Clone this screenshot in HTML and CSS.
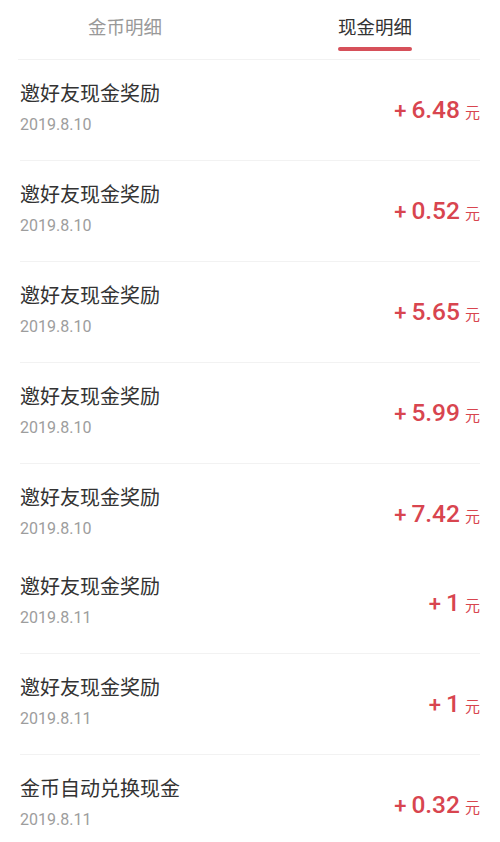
FILE: index.html
```html
<!DOCTYPE html>
<html lang="zh-CN">
<head>
    <meta charset="UTF-8">
    <meta name="viewport" content="width=device-width, initial-scale=1.0">
    <title>现金明细</title>
    <link rel="stylesheet" href="styles.css">
</head>
<body>
    <div class="tabs">
        <div class="tab">金币明细</div>
        <div class="tab active">现金明细<span class="tab-bar"></span></div>
    </div>
    <div class="tabs-line"></div>

    <ul class="list">
        <li class="item">
            <div class="info">
                <div class="title">邀好友现金奖励</div>
                <div class="date">2019.8.10</div>
            </div>
            <div class="amount"><span class="sign">+</span><span class="num">6.48</span><span class="unit">元</span></div>
        </li>
        <li class="item">
            <div class="info">
                <div class="title">邀好友现金奖励</div>
                <div class="date">2019.8.10</div>
            </div>
            <div class="amount"><span class="sign">+</span><span class="num">0.52</span><span class="unit">元</span></div>
        </li>
        <li class="item">
            <div class="info">
                <div class="title">邀好友现金奖励</div>
                <div class="date">2019.8.10</div>
            </div>
            <div class="amount"><span class="sign">+</span><span class="num">5.65</span><span class="unit">元</span></div>
        </li>
        <li class="item">
            <div class="info">
                <div class="title">邀好友现金奖励</div>
                <div class="date">2019.8.10</div>
            </div>
            <div class="amount"><span class="sign">+</span><span class="num">5.99</span><span class="unit">元</span></div>
        </li>
        <li class="item plain">
            <div class="info">
                <div class="title">邀好友现金奖励</div>
                <div class="date">2019.8.10</div>
            </div>
            <div class="amount"><span class="sign">+</span><span class="num">7.42</span><span class="unit">元</span></div>
        </li>
        <li class="item">
            <div class="info">
                <div class="title">邀好友现金奖励</div>
                <div class="date">2019.8.11</div>
            </div>
            <div class="amount"><span class="sign">+</span><span class="num">1</span><span class="unit">元</span></div>
        </li>
        <li class="item">
            <div class="info">
                <div class="title">邀好友现金奖励</div>
                <div class="date">2019.8.11</div>
            </div>
            <div class="amount"><span class="sign">+</span><span class="num">1</span><span class="unit">元</span></div>
        </li>
        <li class="item">
            <div class="info">
                <div class="title">金币自动兑换现金</div>
                <div class="date">2019.8.11</div>
            </div>
            <div class="amount"><span class="sign">+</span><span class="num">0.32</span><span class="unit">元</span></div>
        </li>
    </ul>
</body>
</html>
```

FILE: styles.css
```css
body {
    margin: 0;
    background-color: #fff;
    font-family: Roboto, "Noto Sans CJK SC", sans-serif;
    color: #333;
}
.tabs {
    display: flex;
    height: 59px;
}
.tab {
    flex: 1;
    display: flex;
    flex-direction: column;
    align-items: center;
    padding-top: 12px;
    font-family: "Noto Sans CJK SC", sans-serif;
    font-size: 18.5px;
    line-height: 28px;
    color: #999;
}
.tab.active {
    color: #333;
}
.tab-bar {
    width: 74px;
    height: 4px;
    margin-top: 7px;
    border-radius: 2px;
    background-color: #d6505a;
}
.tabs-line {
    height: 1px;
    margin: 0 20px 0 18px;
    background-color: #f2f2f2;
}
.list {
    list-style: none;
    margin: 0 20px;
    padding: 0;
}
.item {
    display: flex;
    justify-content: space-between;
    align-items: center;
    padding: 19px 0 24px;
    border-bottom: 1px solid #f2f2f2;
}
.item.plain {
    border-bottom: none;
    padding-bottom: 13px;
}
.title {
    font-family: "Noto Sans CJK SC", sans-serif;
    font-size: 20px;
    line-height: 28px;
    color: #333;
}
.date {
    margin-top: 7px;
    font-size: 16px;
    line-height: 22px;
    color: #9d9d9d;
}
.amount {
    display: flex;
    align-items: baseline;
    gap: 5px;
    padding-top: 3px;
    color: #d8454f;
}
.sign {
    font-size: 22px;
    font-weight: 500;
}
.num {
    font-size: 24.5px;
    font-weight: 500;
}
.unit {
    font-family: "Noto Sans CJK SC", sans-serif;
    font-size: 15px;
}
```
